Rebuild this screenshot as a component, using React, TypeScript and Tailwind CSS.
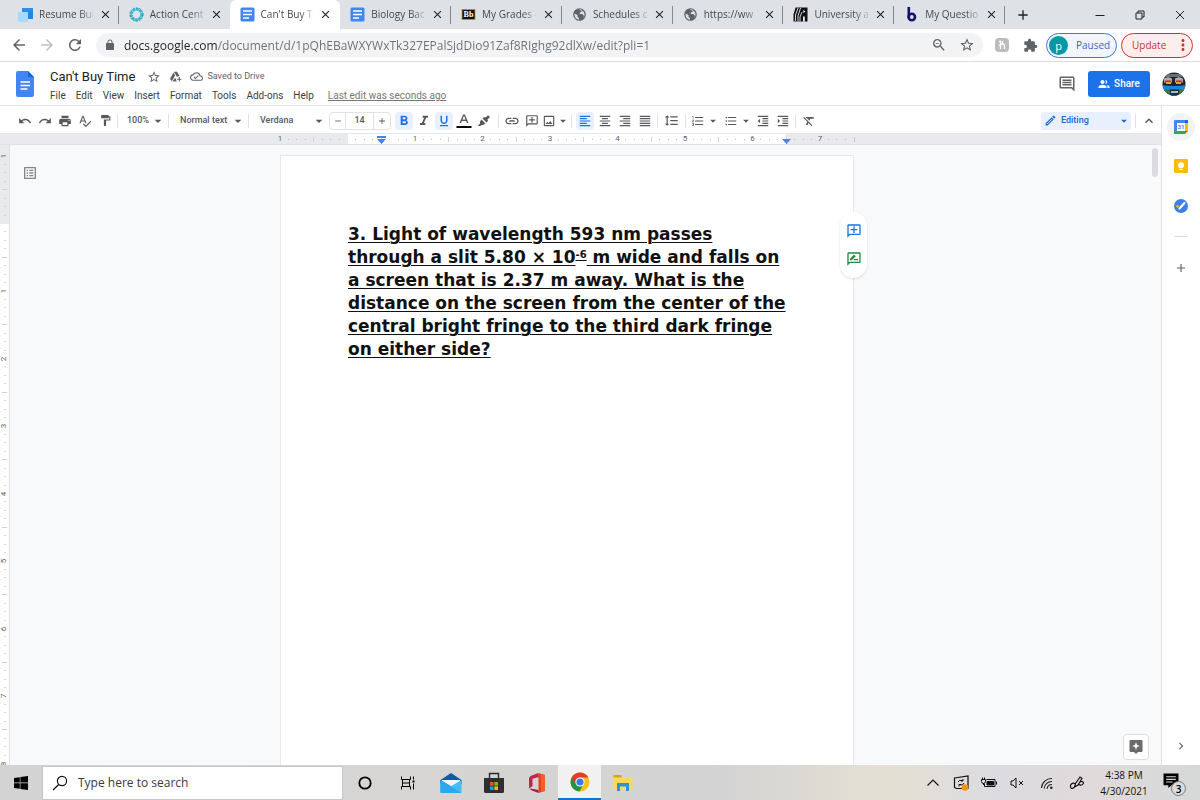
import type { ReactNode } from "react";
import {
  MdAdd,
  MdArrowBack,
  MdArrowDropDown,
  MdArrowForward,
  MdChevronRight,
  MdClose,
  MdFormatAlignCenter,
  MdFormatAlignJustify,
  MdFormatAlignLeft,
  MdFormatAlignRight,
  MdFormatBold,
  MdFormatClear,
  MdFormatIndentDecrease,
  MdFormatIndentIncrease,
  MdFormatItalic,
  MdFormatLineSpacing,
  MdFormatListBulleted,
  MdFormatListNumbered,
  MdFormatUnderlined,
  MdInsertLink,
  MdKeyboardArrowUp,
  MdMoreVert,
  MdOutlineAddComment,
  MdOutlineAddToDrive,
  MdOutlineCloudDone,
  MdOutlineComment,
  MdOutlineEdit,
  MdOutlineImage,
  MdOutlineListAlt,
  MdOutlineRateReview,
  MdOutlineZoomOut,
  MdRedo,
  MdRefresh,
  MdRemove,
  MdSpellcheck,
  MdStarBorder,
  MdUndo,
} from "react-icons/md";

/* ---------- solid glyphs ---------- */

function Solid({ d, className }: { d: string; className: string }) {
  return (
    <svg viewBox="0 0 24 24" className={className} fill="currentColor" fillRule="evenodd">
      <path d={d} />
    </svg>
  );
}

const glyph = {
  extension:
    "M20.5 11H19V7c0-1.1-.9-2-2-2h-4V3.5C13 2.12 11.88 1 10.5 1S8 2.12 8 3.5V5H4c-1.1 0-1.99.9-1.99 2v3.8H3.5c1.49 0 2.7 1.21 2.7 2.7s-1.21 2.7-2.7 2.7H2V20c0 1.1.9 2 2 2h3.8v-1.5c0-1.49 1.21-2.7 2.7-2.7s2.7 1.21 2.7 2.7V22H17c1.1 0 2-.9 2-2v-4h1.5c1.38 0 2.5-1.12 2.5-2.5S21.88 11 20.5 11z",
  lock: "M18 8h-1V6c0-2.76-2.24-5-5-5S7 3.24 7 6v2H6c-1.1 0-2 .9-2 2v10c0 1.1.9 2 2 2h12c1.1 0 2-.9 2-2V10c0-1.1-.9-2-2-2zm-2.9 0H8.9V6c0-1.71 1.39-3.1 3.1-3.1s3.1 1.39 3.1 3.1v2z",
  print:
    "M19 8H5c-1.66 0-3 1.34-3 3v6h4v4h12v-4h4v-6c0-1.66-1.34-3-3-3zm-3 11H8v-5h8v5zm3-7c-.55 0-1-.45-1-1s.45-1 1-1 1 .45 1 1-.45 1-1 1zm-1-9H6v4h12V3z",
  paint:
    "M18 4V3c0-.55-.45-1-1-1H5c-.55 0-1 .45-1 1v4c0 .55.45 1 1 1h12c.55 0 1-.45 1-1V6h1v4H9v11c0 .55.45 1 1 1h2c.55 0 1-.45 1-1v-9h8V4h-3z",
  people:
    "M9 12c2.2 0 4-1.800 4-4s-1.800-4-4-4-4 1.800-4 4 1.800 4 4 4zM9 13.500c-2.700 0-8 1.340-8 4V20h16v-2.500c0-2.660-5.300-4-8-4zM14.800 11.800c1.900 0 3.700-1.700 3.700-3.800s-1.800-3.800-3.700-3.800c1 2.200 1 5.400 0 7.600zM17.500 14c1 .9 1.500 2 1.500 3.500V20h4v-2.500c0-2-2.700-3.100-5.500-3.500z",
};

/* ---------- favicons ---------- */

const DocsFavicon = () => (
  <svg viewBox="0 0 15 15" className="size-[15px] shrink-0">
    <rect x="0.5" y="0.5" width="14" height="14" rx="1.5" fill="#4285f4" />
    <path d="M3 4h9M3 7.5h9M3 11h6" stroke="#fff" strokeWidth="1.4" />
  </svg>
);

const ResumeFavicon = () => (
  <svg viewBox="0 0 15 15" className="size-[15px] shrink-0">
    <path d="M4 1h11v11h-5V6H4z" fill="#1e88e5" />
    <path d="M4 1h11v2L10 6H4z" fill="#2f8fe8" />
    <rect x="0" y="5" width="10" height="10" rx="1" fill="#a6dbff" />
  </svg>
);

const ActionFavicon = () => (
  <svg viewBox="0 0 15 15" className="size-[15px] shrink-0" fill="none">
    <circle cx="7.5" cy="7.5" r="5.3" stroke="#35b5cf" strokeWidth="2.8" strokeDasharray="2.9 0.5" />
    <circle cx="7.5" cy="7.5" r="6.7" stroke="#1893b5" strokeWidth="0.8" strokeDasharray="1.5 1.6" />
  </svg>
);

const BbFavicon = () => (
  <svg viewBox="0 0 15 15" className="size-[15px] shrink-0">
    <rect x="1" y="2.5" width="13" height="10" fill="#111" stroke="#b99337" strokeWidth="0.8" />
    <text x="7.5" y="10.4" textAnchor="middle" fontSize="8" fontWeight="700" fontFamily="Liberation Serif, serif" fill="#fff">
      Bb
    </text>
  </svg>
);

const UniversityFavicon = () => (
  <svg viewBox="0 0 15 15" className="size-[15px] shrink-0">
    <path d="M2.500 0.500h12v14h-14v-7z" fill="#111" />
    <path d="M5 1L2.500 8v6M7.500 1L5 9v5.500M9 5L7 10v4.500" stroke="#e9ebee" strokeWidth="0.900" fill="none" />
    <path d="M10 3l2.500 1.500L10.500 6zM10 9.500h1.800v5H10z" fill="#e9ebee" />
  </svg>
);

const BFavicon = () => (
  <svg viewBox="0 0 15 15" className="size-[15px] shrink-0" fill="none" stroke="#12126b" strokeWidth="2.6">
    <path d="M4.800 0v10.500" />
    <circle cx="7.800" cy="10" r="3.200" />
  </svg>
);

const GlobeFavicon = () => (
  <svg viewBox="0 0 15 15" className="size-[15px] shrink-0">
    <circle cx="7.500" cy="7.500" r="6.300" fill="#5f6368" />
    <path d="M2.500 6.500L5.500 8v2l1.500 1v1.500C4.300 12.500 2.300 10.200 2.500 6.500zM6.500 2.500h3l1 1.500L8 5.500 7.500 7h3l1.500 2-.8 2.300c1.600-1.600 1.800-4.700.3-6.800z" fill="#dee1e6" />
  </svg>
);

/* ---------- browser chrome ---------- */

const tabs: { title: string; icon: ReactNode; active?: boolean; line?: boolean }[] = [
  { title: "Resume Bui", icon: <ResumeFavicon />, line: true },
  { title: "Action Cent", icon: <ActionFavicon /> },
  { title: "Can't Buy Ti", icon: <DocsFavicon />, active: true },
  { title: "Biology Bac", icon: <DocsFavicon />, line: true },
  { title: "My Grades -", icon: <BbFavicon />, line: true },
  { title: "Schedules o", icon: <GlobeFavicon />, line: true },
  { title: "https://ww", icon: <GlobeFavicon />, line: true },
  { title: "University a", icon: <UniversityFavicon />, line: true },
  { title: "My Questio", icon: <BFavicon />, line: true },
];

function TabStrip() {
  return (
    <div className="flex h-[29px] shrink-0 bg-[#dee1e6] pl-2">
      <div role="tablist" className="grid min-w-0 flex-1 grid-cols-9">
        {tabs.map((tab, i) => (
          <div
            key={i}
            className={
              tab.active
                ? "flex min-w-0 items-center gap-1.5 rounded-t-md bg-white pr-2 pl-2.5"
                : "flex min-w-0 items-center gap-1.5 pl-2.5"
            }
          >
            {tab.icon}
            <button
              role="tab"
              aria-selected={!!tab.active}
              className="min-w-0 flex-1 text-left text-[10px] whitespace-nowrap text-[#45494d] [mask-image:linear-gradient(to_right,black_75%,rgb(0_0_0/0.2))]"
            >
              {tab.title}
            </button>
            <button aria-label="Close tab">
              <MdClose className="size-[13px] text-[#202124]" />
            </button>
            {!tab.active && (
              <span className={tab.line ? "h-[18px] w-px bg-[#85888c]" : "h-[18px] w-px"} />
            )}
          </div>
        ))}
      </div>
      <div className="flex w-[195px] shrink-0 items-center text-[#202124]">
        <button aria-label="New tab" className="flex w-[75px] pl-2.5">
          <MdAdd className="size-4" />
        </button>
        <button aria-label="Minimize" className="flex w-10 justify-center">
          <svg viewBox="0 0 10 10" className="size-2.5" stroke="currentColor"><path d="M0.500 5.500h9" /></svg>
        </button>
        <button aria-label="Restore" className="flex w-10 justify-center">
          <svg viewBox="0 0 10 10" className="size-2.5" stroke="currentColor" fill="none">
            <path d="M1 3h6v6H1zM3 3V1h6v6H7" />
          </svg>
        </button>
        <button aria-label="Close window" className="flex w-10 justify-center">
          <svg viewBox="0 0 10 10" className="size-2.5" stroke="currentColor"><path d="M1 1l8 8M9 1l-8 8" /></svg>
        </button>
      </div>
    </div>
  );
}

function AddressBar() {
  return (
    <div className="flex h-[33px] shrink-0 items-center border-b border-[#dadce0] bg-white pr-[7px] pl-2.5 text-[#5f6368]">
      <button aria-label="Back" className="mr-2.5"><MdArrowBack className="size-[18px]" /></button>
      <button aria-label="Forward" className="mr-2.5 text-[#bdc1c6]"><MdArrowForward className="size-[18px]" /></button>
      <button aria-label="Reload"><MdRefresh className="size-[18px]" /></button>
      <div className="ml-3 flex h-6 flex-1 items-center rounded-full bg-[#f1f3f4] pr-2 pl-2">
        <Solid d={glyph.lock} className="size-3 shrink-0" />
        <input
          aria-label="Address"
          defaultValue="docs.google.com/document/d/1pQhEBaWXYWxTk327EPalSjdDio91Zaf8RIghg92dlXw/edit?pli=1"
          className="ml-2 h-5 min-w-0 flex-1 bg-[linear-gradient(to_right,#202124_93px,#6b6f74_93px)] bg-clip-text pt-px text-[12px] text-transparent outline-none"
        />
        <button aria-label="Zoom" className="mr-3"><MdOutlineZoomOut className="size-4" /></button>
        <button aria-label="Bookmark"><MdStarBorder className="size-4" /></button>
      </div>
      <button
        aria-label="Extension"
        className="ml-3 flex size-3.5 items-center justify-center rounded-sm bg-[#bcbcbc]"
      >
        <svg viewBox="0 0 14 14" className="size-3.5" fill="none" stroke="#fff" strokeWidth="1.300">
          <path d="M5.500 2.500v8.500M4 3.500h1.500M5.500 8q0-2 2-2t2 2v3M7.500 3v3.500M4 7.500h1.500" />
        </svg>
      </button>
      <button aria-label="Extensions" className="ml-3.5"><Solid d={glyph.extension} className="size-[15px]" /></button>
      <button className="ml-2 flex h-[25px] w-[71px] items-center gap-2 rounded-full border border-[#3b78e0] bg-[#f1f5fe] pl-0.5 text-[10px] text-[#3d67c4]">
        <span className="flex size-[19px] items-center justify-center rounded-full bg-[#0097a7] text-[11px] leading-none text-white">p</span>
        Paused
      </button>
      <button className="ml-1 flex h-[25px] w-[72px] items-center rounded-full border border-[#d93025] bg-[#fdeeed] pl-2.5 text-[10px] text-[#c5362c]">
        Update
        <MdMoreVert className="ml-auto size-[18px]" />
      </button>
    </div>
  );
}

/* ---------- docs header ---------- */

const menus = ["File", "Edit", "View", "Insert", "Format", "Tools", "Add-ons", "Help"];

function DocsHeader() {
  return (
    <header className="flex h-11 shrink-0 items-center border-b border-[#e4e6e8] bg-white pr-3.5 pl-4 font-['Roboto',sans-serif]">
      <svg viewBox="0 0 18 26" className="mr-4 h-[26px] w-[18px]">
        <path d="M2 0h10l6 6v18a2 2 0 0 1-2 2H2a2 2 0 0 1-2-2V2a2 2 0 0 1 2-2z" fill="#4285f4" />
        <path d="M12 0l6 6h-6z" fill="#1967d2" />
        <path d="M4.500 11h9.500M4.500 14.500h9.500M4.500 18h7" stroke="#fff" strokeWidth="1.300" />
      </svg>
      <div className="flex flex-col gap-0.5 pt-1">
        <div className="flex h-[18px] items-center text-[#5f6368]">
          <h1 className="mr-3 text-[13px] text-[#202124]">Can't Buy Time</h1>
          <button aria-label="Star" className="mr-2"><MdStarBorder className="size-3.5" /></button>
          <button aria-label="Add shortcut to Drive" className="mr-2"><MdOutlineAddToDrive className="size-[13px]" /></button>
          <MdOutlineCloudDone className="mr-1 size-[13px]" />
          <span className="text-[9px]">Saved to Drive</span>
        </div>
        <nav className="flex h-4 items-center gap-2.5 text-[10px] text-[#3c4043]">
          {menus.map((m) => (
            <button key={m}>{m}</button>
          ))}
          <a href="#history" className="ml-1 text-[#777] underline">Last edit was seconds ago</a>
        </nav>
      </div>
      <div className="ml-auto flex items-center">
        <button aria-label="Comments" className="mr-3 text-[#5f6368]"><MdOutlineComment className="size-[18px]" /></button>
        <button className="mr-3 flex h-[26px] w-[62px] items-center justify-center gap-1 rounded-[3px] bg-[#1a73e8] text-[10px] font-medium text-white">
          <Solid d={glyph.people} className="size-3" />
          Share
        </button>
        <button aria-label="Account">
          <svg viewBox="0 0 24 24" className="size-6">
            <clipPath id="avatar"><circle cx="12" cy="12" r="11.500" /></clipPath>
            <g clipPath="url(#avatar)">
              <rect width="24" height="24" fill="#20242a" />
              <path d="M0 2h24v3H0z" fill="#63727a" />
              <path d="M2 6.500l4-1.500 4 1.500v4H2zM13 6.500l4-1.500 4 1.500v4h-8z" fill="#b7aaa3" />
              <path d="M3 8.500h6v1.500H3zM14 8.500h6v1.500h-6z" fill="#c62f24" />
              <path d="M4 10h5v2H4zM14 10h5v2h-5z" fill="#e2a53a" />
              <path d="M0 13q12 2 24 0V19H0z" fill="#1787dc" />
              <path d="M0 18q12-2 24 0v6H0z" fill="#3b7a31" />
              <rect x="8" y="17.500" width="9" height="6.500" fill="#17304f" />
              <path d="M9 20h7" stroke="#dce6ef" strokeWidth="1.500" />
            </g>
          </svg>
        </button>
      </div>
    </header>
  );
}

/* ---------- docs toolbar ---------- */

const Sep = () => (
  <span className="flex w-1 shrink-0 justify-center"><span className="h-3.5 w-px bg-[#e0e2e5]" /></span>
);

function Tool({ label, active, children }: { label: string; active?: boolean; children: ReactNode }) {
  return (
    <button aria-label={label} className="flex w-5 shrink-0 justify-center">
      <span
        className={
          active
            ? "flex h-[18px] w-[18px] items-center justify-center rounded-sm bg-[#e8f0fe] text-[#1a73e8]"
            : "flex h-[18px] w-[18px] items-center justify-center"
        }
      >
        {children}
      </span>
    </button>
  );
}

function Pick({ label, value, size }: { label: string; value: string; size: string }) {
  return (
    <label className={size}>
      <select aria-label={label} className="min-w-0 flex-1 appearance-none text-[9px] font-medium outline-none">
        <option>{value}</option>
      </select>
      <MdArrowDropDown className="size-4 shrink-0" />
    </label>
  );
}

function Toolbar() {
  return (
    <div className="flex h-7 shrink-0 items-center border-b border-[#e4e6e8] bg-white pt-0.5 pl-[15px] font-['Roboto',sans-serif] text-[#55595e]">
      <Tool label="Undo"><MdUndo className="size-3.5" /></Tool>
      <Tool label="Redo"><MdRedo className="size-3.5" /></Tool>
      <Tool label="Print"><Solid d={glyph.print} className="size-3.5" /></Tool>
      <Tool label="Spelling"><MdSpellcheck className="size-3.5" /></Tool>
      <Tool label="Paint format"><Solid d={glyph.paint} className="size-[13px]" /></Tool>
      <Sep />
      <Pick label="Zoom" value="100%" size="flex w-[47px] items-center pl-2" />
      <Sep />
      <Pick label="Style" value="Normal text" size="flex w-[76px] items-center pl-2.5" />
      <Sep />
      <Pick label="Font" value="Verdana" size="flex w-[79px] items-center pr-0.5 pl-2.5" />
      <div className="mr-[3px] flex h-[18px] w-[62px] divide-x divide-[#e0e2e5] rounded-sm border border-[#e0e2e5]">
        <button aria-label="Decrease font size" className="flex w-4 items-center justify-center"><MdRemove className="size-2.5" /></button>
        <input aria-label="Font size" defaultValue="14" className="min-w-0 flex-1 text-center text-[9px] font-medium outline-none" />
        <button aria-label="Increase font size" className="flex w-4 items-center justify-center"><MdAdd className="size-2.5" /></button>
      </div>
      <Tool label="Bold" active><MdFormatBold className="size-4" /></Tool>
      <Tool label="Italic"><MdFormatItalic className="size-4" /></Tool>
      <Tool label="Underline" active><MdFormatUnderlined className="size-3.5" /></Tool>
      <Tool label="Text color">
        <svg viewBox="0 0 16 16" className="size-4">
          <path d="M7.100 1.500h1.800L12.500 10h-1.600l-.8-2.100H5.900L5.100 10H3.500zM6.400 6.600h3.200L8 2.700z" fill="currentColor" />
          <path d="M0.500 13h15v2h-15z" fill="#000" />
        </svg>
      </Tool>
      <Tool label="Highlight color">
        <svg viewBox="0 0 14 14" className="size-3.5" fill="currentColor">
          <path d="M4.500 5.500l4 4L6 11H4.500L3.500 12H0.800L3 9.500V7.500zM5.500 4.500L7 3l1.500.5L11 1.200 13 3l-2.500 2.500L11 7 9.500 8.500z" />
        </svg>
      </Tool>
      <span className="mx-0.5 flex"><Sep /></span>
      <Tool label="Link"><MdInsertLink className="size-4" /></Tool>
      <Tool label="Add comment"><MdOutlineAddComment className="size-3.5 -scale-x-100" /></Tool>
      <button aria-label="Insert image" className="flex w-[25px] items-center">
        <MdOutlineImage className="size-3.5 shrink-0" />
        <MdArrowDropDown className="size-3.5 shrink-0" />
      </button>
      <span className="mx-0.5 flex"><Sep /></span>
      <Tool label="Align left" active><MdFormatAlignLeft className="size-3.5" /></Tool>
      <Tool label="Align center"><MdFormatAlignCenter className="size-3.5" /></Tool>
      <Tool label="Align right"><MdFormatAlignRight className="size-3.5" /></Tool>
      <Tool label="Justify"><MdFormatAlignJustify className="size-3.5" /></Tool>
      <Sep />
      <button aria-label="Line spacing" className="flex w-6 justify-center"><MdFormatLineSpacing className="size-[15px]" /></button>
      <Sep />
      <button aria-label="Numbered list" className="flex w-[33px] items-center pl-1">
        <MdFormatListNumbered className="size-3.5 shrink-0" /><MdArrowDropDown className="ml-px size-3.5 shrink-0" />
      </button>
      <button aria-label="Bulleted list" className="flex w-[33px] items-center pl-1">
        <MdFormatListBulleted className="size-3.5 shrink-0" /><MdArrowDropDown className="ml-px size-3.5 shrink-0" />
      </button>
      <Tool label="Decrease indent"><MdFormatIndentDecrease className="size-3.5" /></Tool>
      <Tool label="Increase indent"><MdFormatIndentIncrease className="size-3.5" /></Tool>
      <Sep />
      <button aria-label="Clear formatting" className="flex w-6 justify-center"><MdFormatClear className="size-3.5" /></button>
      <label className="mr-0.5 ml-auto flex h-[18px] w-[90px] items-center rounded-[3px] bg-[#e8f0fe] pl-[3px] text-[#1967d2]">
        <MdOutlineEdit className="mr-1 size-[13px] shrink-0" />
        <select aria-label="Mode" className="min-w-0 flex-1 appearance-none text-[9px] font-medium outline-none">
          <option>Editing</option>
        </select>
        <MdArrowDropDown className="size-3.5 shrink-0" />
      </label>
      <Sep />
      <button aria-label="Hide menus" className="flex w-6 justify-center"><MdKeyboardArrowUp className="size-4" /></button>
    </div>
  );
}

/* ---------- rulers ---------- */

const PAGE_STEPS = 68;
const SIDE_STEPS = 73;
const steps = (n: number) => Array.from({ length: n }, (_, i) => i);

function HorizontalRuler() {
  return (
    <div className="flex h-[11px] shrink-0 justify-center border-b border-[#dfe1e5] bg-[#e8eaed] pr-[37px] pl-2.5 font-['Roboto',sans-serif] text-[8px] leading-none text-[#5f6368]">
      <div className="flex w-[574px]">
        {steps(PAGE_STEPS).map((i) => (
          <span key={i} className={i >= 8 && i < 60 ? "relative flex flex-1 items-center bg-white" : "relative flex flex-1 items-center"}>
            <span className="flex w-0 justify-center">
              {i % 8 === 0 && i !== 8 && <span>{Math.abs(i / 8 - 1)}</span>}
              {i % 8 === 4 && <span className="h-[5px] w-px shrink-0 bg-[#cfd2d6]" />}
              {i % 4 !== 0 && <span className="size-px shrink-0 bg-[#b9bdc1]" />}
            </span>
            {i === 12 && (
              <svg viewBox="0 0 9 8" className="absolute top-0.5 -left-1 z-10 h-2 w-[9px]" fill="#4285f4">
                <path d="M0 0h9v2H0zM0 3h9L4.500 8z" />
              </svg>
            )}
            {i === 60 && (
              <svg viewBox="0 0 9 8" className="absolute top-0.5 -left-1 z-10 h-2 w-[9px]" fill="#4285f4">
                <path d="M0 3h9L4.500 8z" />
              </svg>
            )}
          </span>
        ))}
        <span className="flex w-0 items-center"><span className="h-[5px] w-px shrink-0 bg-[#c3c6ca]" /></span>
      </div>
    </div>
  );
}

function VerticalRuler() {
  return (
    <div className="w-2.5 shrink-0 overflow-hidden border-r border-[#e0e2e6] bg-[#e8eaed] pt-[11px] font-['Roboto',sans-serif] text-[8px] leading-none text-[#5f6368]">
      <div className="flex h-[616px] flex-col">
        {steps(SIDE_STEPS).map((i) => (
          <span key={i} className={i >= 8 ? "flex flex-1 flex-col items-center bg-white" : "flex flex-1 flex-col items-center"}>
            <span className="flex h-0 items-center">
              {i % 8 === 0 && i !== 8 && <span className="-rotate-90">{Math.abs(i / 8 - 1)}</span>}
              {i % 8 === 4 && <span className="h-px w-[5px] bg-[#cfd2d6]" />}
              {i % 4 !== 0 && <span className="h-px w-0.5 bg-[#d3d6da]" />}
            </span>
          </span>
        ))}
      </div>
    </div>
  );
}

/* ---------- canvas ---------- */

function Canvas() {
  return (
    <div className="flex min-h-0 flex-1">
      <VerticalRuler />
      <main className="relative flex min-w-0 flex-1 justify-center overflow-hidden bg-[#f8f9fa] pt-[10px] pr-[37px]">
        <button aria-label="Show document outline" className="absolute top-5 left-3 text-[#80868b]">
          <MdOutlineListAlt className="size-4" />
        </button>
        <article className="relative w-[574px] shrink-0 border border-b-0 border-[#e6e8eb] bg-white px-[67px] pt-[67px]">
          <p className="text-[17px] leading-[23px] font-bold whitespace-nowrap text-[#111] underline font-['DejaVu_Sans',sans-serif] decoration-1 underline-offset-2">
            3. Light of wavelength 593 nm passes
            <br />
            through a slit 5.80 × 10
            <sup className="inline-block text-[10px] leading-none underline">-6</sup> m wide and falls on
            <br />
            a screen that is 2.37 m away. What is the
            <br />
            distance on the screen from the center of the
            <br />
            central bright fringe to the third dark fringe
            <br />
            on either side?
          </p>
          <div className="absolute top-14 -right-3.5 flex h-[66px] w-[27px] flex-col items-center justify-center gap-3 rounded-full bg-white shadow">
            <button aria-label="Add comment" className="text-[#1a73e8]"><MdOutlineAddComment className="size-4 -scale-x-100" /></button>
            <button aria-label="Suggest edits" className="text-[#1e8e3e]"><MdOutlineRateReview className="size-4" /></button>
          </div>
        </article>
        <span className="absolute top-[3px] right-[3px] h-[29px] w-1.5 rounded-full bg-[#dadce0]" />
        <button
          aria-label="Explore"
          className="absolute right-3 bottom-[5px] flex size-[26px] items-center justify-center rounded-sm border border-[#dcdee1] bg-white"
        >
          <svg viewBox="0 0 14 14" className="size-3.5">
            <path d="M1.500 0h11a1 1 0 0 1 1 1v10a1 1 0 0 1-1 1H9l-2 2-2-2H1.500a1 1 0 0 1-1-1V1a1 1 0 0 1 1-1z" fill="#6b6b6b" />
            <path d="M7 2.200l1.100 2.700L10.800 6 8.100 7.100 7 9.800 5.900 7.100 3.200 6l2.700-1.100z" fill="#fff" />
          </svg>
        </button>
      </main>
    </div>
  );
}

function SidePanel() {
  return (
    <aside className="flex w-[39px] shrink-0 flex-col items-center border-l border-[#e0e2e6] bg-white pt-[7px]">
      <button aria-label="Calendar" className="flex size-7 items-center justify-center rounded-full bg-[#f1f3f4]">
        <svg viewBox="0 0 14 14" className="size-3.5">
          <rect width="14" height="14" rx="1" fill="#4285f4" />
          <path d="M11 3h3v8h-3z" fill="#fbbc04" />
          <path d="M11 0h2a1 1 0 0 1 1 1v2h-3z" fill="#1967d2" />
          <path d="M0 11h11v3H1a1 1 0 0 1-1-1z" fill="#34a853" />
          <path d="M11 11h3l-3 3z" fill="#ea4335" />
          <path d="M11 14l3-3v3z" fill="#f1f3f4" />
          <rect x="3" y="3" width="8" height="8" fill="#fff" />
          <text x="7" y="9.300" textAnchor="middle" fontSize="6" fontFamily="Roboto, sans-serif" fontWeight="700" fill="#4285f4">31</text>
        </svg>
      </button>
      <button aria-label="Keep" className="mt-[18px]">
        <svg viewBox="0 0 14 14" className="size-3.5">
          <rect width="14" height="14" rx="1" fill="#fbbc04" />
          <circle cx="7" cy="6.300" r="3" fill="#fff" />
          <path d="M5.500 8h3v1.300h-3zM5.500 10h3v1h-3z" fill="#fff" />
        </svg>
      </button>
      <button aria-label="Tasks" className="mt-[26px]">
        <svg viewBox="0 0 14 14" className="size-3.5">
          <circle cx="7" cy="7" r="7" fill="#3f7fe8" />
          <path d="M5.500 9.500l5-5.500" stroke="#fff" strokeWidth="2.200" strokeLinecap="round" />
          <circle cx="3.600" cy="7.200" r="1.300" fill="#fbbc04" />
        </svg>
      </button>
      <span className="mt-[23px] h-px w-3.5 bg-[#dadce0]" />
      <button aria-label="Get add-ons" className="mt-6 text-[#5f6368]"><MdAdd className="size-3.5" /></button>
      <button aria-label="Hide side panel" className="mt-auto mb-3 text-[#5f6368]"><MdChevronRight className="size-3.5" /></button>
    </aside>
  );
}

/* ---------- taskbar ---------- */

function Slot({ label, children, open }: { label: string; children: ReactNode; open?: boolean }) {
  return (
    <button
      aria-label={label}
      className={
        open
          ? "flex h-full w-[43px] items-center justify-center border-b-2 border-[#0f74d1] bg-[#f1f1f1]"
          : "flex h-full w-[43px] items-center justify-center"
      }
    >
      {children}
    </button>
  );
}

function Taskbar() {
  return (
    <footer className="flex h-[35px] shrink-0 items-center bg-[linear-gradient(to_right,#d3d3d3_0%,#d6d5d3_30%,#d3d3d3_60%,#e4e0d3_74%,#dcdbdf_83%,#e0dada_92%,#d5d8d8_100%)] text-black">
      <button aria-label="Start" className="flex w-[42px] shrink-0 justify-center">
        <svg viewBox="0 0 14 14" className="size-3.5">
          <path d="M0 2l5.800-.8v5.400H0zM6.400 1.100L14 0v6.600H6.400zM0 7.200h5.800v5.500L0 12zM6.400 7.200H14V14l-7.600-1.100z" />
        </svg>
      </button>
      <label className="flex h-[34px] w-[301px] shrink-0 items-center border border-[#c6c6c6] bg-white pl-[9px]">
        <svg viewBox="0 0 16 16" className="size-4" fill="none" stroke="#111" strokeWidth="1.200">
          <circle cx="10" cy="6" r="4.600" />
          <path d="M6.800 9.500L1 15" />
        </svg>
        <input
          aria-label="Search"
          placeholder="Type here to search"
          className="ml-2.5 min-w-0 flex-1 pt-px text-[12px] outline-none placeholder:text-[#3a3a3a]"
        />
      </label>
      <Slot label="Cortana">
        <svg viewBox="0 0 14 14" className="size-3.5" fill="none" stroke="#000" strokeWidth="1.800"><circle cx="7" cy="7" r="5.700" /></svg>
      </Slot>
      <Slot label="Task view">
        <svg viewBox="0 0 14 14" className="size-3.5" fill="none" stroke="#000">
          <path d="M0.500 0.500v3h9v-3M0.500 13.500v-3h9v3M1.500 3.500v7M8.500 3.500v7M1.500 7h7M12.500 0.500v3M12.500 7.500v6" />
          <path d="M11.500 4.500h2v2h-2z" fill="#000" stroke="none" />
        </svg>
      </Slot>
      <Slot label="Mail">
        <svg viewBox="0 0 22 20" className="h-5 w-[22px]">
          <path d="M0.500 7L11 0l10.500 7v4h-21z" fill="#0b5cab" />
          <path d="M2 7h18v7H2z" fill="#f2f6fa" />
          <path d="M0.500 7L11 13 0.500 19.500z" fill="#1d9be8" />
          <path d="M21.500 7L8 15l13.500 5z" fill="#43bdf4" />
          <path d="M0.500 20V7L21.500 20z" fill="#2aa8ee" />
        </svg>
      </Slot>
      <Slot label="Microsoft Store">
        <svg viewBox="0 0 22 22" className="size-[22px]">
          <path d="M6.500 7V1.500h9V7" fill="none" stroke="#2b2b2b" strokeWidth="1.400" />
          <path d="M1 6h20v13.500a1.500 1.500 0 0 1-1.500 1.500h-17A1.500 1.500 0 0 1 1 19.500z" fill="#2f2f2f" />
          <path d="M7 10h3.600v3.600H7z" fill="#f25022" />
          <path d="M11.400 10H15v3.600h-3.600z" fill="#7fba00" />
          <path d="M7 14.400h3.600V18H7z" fill="#00a4ef" />
          <path d="M11.400 14.400H15V18h-3.600z" fill="#ffb900" />
        </svg>
      </Slot>
      <Slot label="Office">
        <svg viewBox="0 0 18 20" className="h-5 w-[18px]">
          <path d="M10.500 0L2.500 3 1 5v10.200l3.500-2V5.800L11 4z" fill="#c3224b" />
          <path d="M10.500 0L17 2v16l-6.500 2V4z" fill="#e5401f" />
          <path d="M13 1l4 1v16l-4 1z" fill="#f1602a" />
          <path d="M1 15.200L10.500 17v3L4 17.500z" fill="#a51b35" />
        </svg>
      </Slot>
      <Slot label="Chrome" open>
        <svg viewBox="0 0 20 20" className="size-5">
          <circle cx="10" cy="10" r="9.500" fill="#fbc116" />
          <path d="M10 10L1.800 5.200A9.500 9.500 0 0 0 9.400 19.500L13.500 12z" fill="#229342" />
          <path d="M10 5.500h8.400l-.2-.3A9.500 9.500 0 0 0 1.800 5.200l4 7z" fill="#e33b2e" />
          <circle cx="10" cy="10" r="4.600" fill="#fff" />
          <circle cx="10" cy="10" r="3.600" fill="#3b78e7" />
        </svg>
      </Slot>
      <Slot label="File Explorer">
        <svg viewBox="0 0 20 18" className="h-[18px] w-5">
          <path d="M0.500 1.500h7l2 2h10v12h-19z" fill="#ffd75e" />
          <path d="M0.500 1h8v2.500h-8z" fill="#d9a21b" />
          <path d="M4 17V9h12v8h-3v-4.500H7V17z" fill="#2f8fe0" />
        </svg>
      </Slot>
      <div className="ml-auto flex h-full shrink-0 items-center pr-3.5">
        <button aria-label="Hidden icons" className="flex w-7 justify-center">
          <svg viewBox="0 0 14 14" className="size-3.5" fill="none" stroke="#111" strokeWidth="1.200"><path d="M1.500 9.500L7 4l5.500 5.500" /></svg>
        </button>
        <button aria-label="Windows Update" className="flex w-7 justify-center">
          <svg viewBox="0 0 16 16" className="size-4" fill="none" stroke="#111">
            <path d="M1.500 3L15 1v12.500H3.500l-2-1z" strokeWidth="1.200" />
            <path d="M5 7q1-2.500 4.500-1.500M10 4v2H8M11 8q-1 2.800-4.500 1.800M6 11.500v-2h2" />
            <circle cx="12" cy="12.500" r="3.300" fill="#ff9400" stroke="none" />
          </svg>
        </button>
        <button aria-label="Battery" className="flex w-7 justify-center">
          <svg viewBox="0 0 16 14" className="h-3.5 w-4" fill="none" stroke="#111">
            <path d="M5.500 3.500h8.500v7H3.500V8M15.500 5.500v3" />
            <path d="M6 5.500h6.500v3.500H6z" fill="#111" />
            <path d="M0.500 3.500h4v2a2 2 0 0 1-4 0zM1.500 1.500v2M3.500 1.500v2M2.500 7v2" />
          </svg>
        </button>
        <button aria-label="Volume" className="flex w-7 justify-center">
          <svg viewBox="0 0 14 14" className="size-3.5" fill="none" stroke="#111">
            <path d="M1 5h2l3-3v10L3 9H1zM9 5l4 4M13 5l-4 4" />
          </svg>
        </button>
        <button aria-label="Network" className="flex w-8 justify-center">
          <svg viewBox="0 0 14 14" className="size-3.5" fill="none" stroke="#222" strokeWidth="1.100">
            <path d="M1.500 12A10 10 0 0 1 12 2.500M4.200 12.500A7.500 7.500 0 0 1 12 5.500M7 12.800A5 5 0 0 1 12 8.500" />
            <circle cx="11.300" cy="11.800" r="1.300" fill="#222" stroke="none" />
          </svg>
        </button>
        <button aria-label="Pen" className="flex w-7 justify-center">
          <svg viewBox="0 0 16 16" className="size-4" fill="none" stroke="#111" strokeWidth="1.200">
            <path d="M5.500 12L6.500 8.500 11 2l2 1.500L9 10zM6 8.500C3 7.500 1 9.500 1.500 12s3.500 1 4 0M10.500 7.500C13 5.500 15.500 7 14 9s-4 1-4.500 0" />
          </svg>
        </button>
        <time className="flex w-[66px] flex-col items-center text-[10px] leading-4 text-[#111]">
          <span>4:38 PM</span>
          <span>4/30/2021</span>
        </time>
        <button aria-label="3 new notifications" className="relative ml-1.5 flex h-full w-[23px] items-center">
          <svg viewBox="0 0 15 15" className="mb-1 size-4">
            <path d="M0.500 0.500h14v11H8L5 14v-2.500H0.500z" fill="#000" />
            <path d="M3 3.500h9M3 6h9M3 8.500h6" stroke="#d6d6d6" />
          </svg>
          <span className="absolute right-0 bottom-1 flex size-[15px] items-center justify-center rounded-full border border-[#777] bg-[#dcdcdc] text-[10px] leading-none font-semibold">
            3
          </span>
        </button>
      </div>
    </footer>
  );
}

export default function App() {
  return (
    <div className="flex h-screen flex-col overflow-hidden bg-white font-['Open_Sans','Noto_Sans',sans-serif]">
      <TabStrip />
      <AddressBar />
      <DocsHeader />
      <div className="flex min-h-0 flex-1">
        <div className="flex min-w-0 flex-1 flex-col">
          <Toolbar />
          <HorizontalRuler />
          <Canvas />
        </div>
        <SidePanel />
      </div>
      <Taskbar />
    </div>
  );
}
